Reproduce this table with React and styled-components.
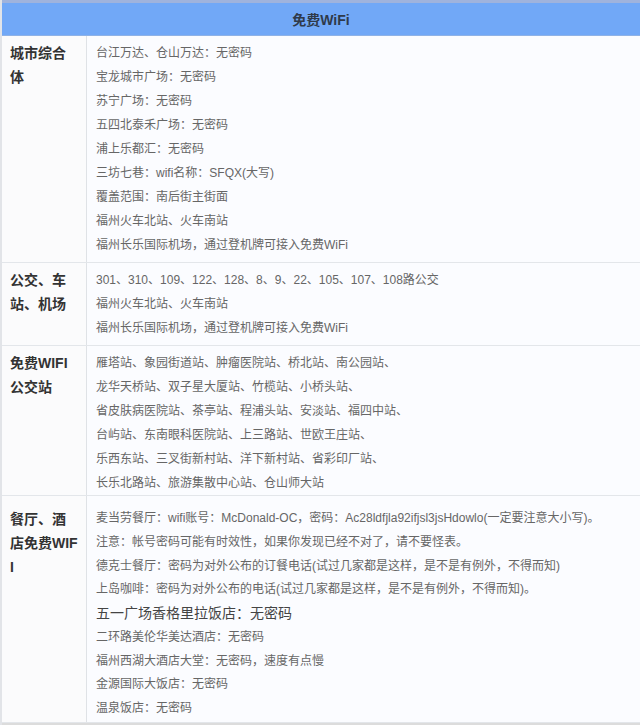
import React from "react";
import styled, { createGlobalStyle } from "styled-components";

const Global = createGlobalStyle`
  html, body { margin: 0; padding: 0; background: #fcfcfe; }
  body { font-family: "Liberation Sans", "Noto Sans CJK SC", sans-serif; }
`;

const Table = styled.div`
  width: 640px;
  height: 725px;
  overflow: hidden;
  border-left: 2px solid #e2e4e8;
  box-sizing: border-box;
  background: #fbfcfe;
  display: flex;
  flex-direction: column;
`;

const Header = styled.div`
  flex: none;
  height: 32px;
  border-top: 3px solid #9fb3dd;
  border-bottom: 1px solid #8fb2e6;
  background: #71a8f7;
  display: flex;
  align-items: center;
  justify-content: center;
  font-size: 14px;
  font-weight: 700;
  color: #2f3a4a;
`;

const Row = styled.div`
  flex: none;
  display: grid;
  grid-template-columns: 85px 1fr;
  border-bottom: 1px solid #e3e6ea;
`;

const Label = styled.div`
  padding: ${(p) => p.$pt ?? 5}px 8px 0 8px;
  font-size: 14px;
  font-weight: 700;
  line-height: 24px;
  color: #333;
  word-break: break-all;
  background: #fbfbfc;
  border-right: 1px solid #dfe2e6;
`;

const Content = styled.div`
  padding: ${(p) => p.$pt ?? 5}px 8px ${(p) => p.$pb ?? 5}px 9px;
  background: #fbfcff;
`;

const Line = styled.div`
  font-size: ${(p) => (p.$big ? 14 : 12)}px;
  line-height: ${(p) => p.$lh || 24}px;
  color: ${(p) => (p.$big ? "#444" : "#666")};
  white-space: nowrap;
`;

const Bottom = styled.div`
  flex: 1;
  background: #dcdcdc;
`;

const rows = [
  {
    label: "城市综合体",
    lines: [
      "台江万达、仓山万达：无密码",
      "宝龙城市广场：无密码",
      "苏宁广场：无密码",
      "五四北泰禾广场：无密码",
      "浦上乐都汇：无密码",
      "三坊七巷：wifi名称：SFQX(大写)",
      "覆盖范围：南后街主街面",
      "福州火车北站、火车南站",
      "福州长乐国际机场，通过登机牌可接入免费WiFi",
    ],
  },
  {
    label: "公交、车站、机场",
    lines: [
      "301、310、109、122、128、8、9、22、105、107、108路公交",
      "福州火车北站、火车南站",
      "福州长乐国际机场，通过登机牌可接入免费WiFi",
    ],
  },
  {
    label: "免费WIFI公交站",
    lines: [
      "雁塔站、象园街道站、肿瘤医院站、桥北站、南公园站、",
      "龙华天桥站、双子星大厦站、竹榄站、小桥头站、",
      "省皮肤病医院站、茶亭站、程浦头站、安淡站、福四中站、",
      "台屿站、东南眼科医院站、上三路站、世欧王庄站、",
      "乐西东站、三叉街新村站、洋下新村站、省彩印厂站、",
      "长乐北路站、旅游集散中心站、仓山师大站",
    ],
    pb: 0,
  },
  {
    label: "餐厅、酒店免费WIFI",
    pt: 11,
    pb: 1,
    lh: 23.75,
    lines: [
      "麦当劳餐厅：wifi账号：McDonald-OC，密码：Ac28ldfjla92ifjsl3jsHdowlo(一定要注意大小写)。",
      "注意：帐号密码可能有时效性，如果你发现已经不对了，请不要怪表。",
      "德克士餐厅：密码为对外公布的订餐电话(试过几家都是这样，是不是有例外，不得而知)",
      "上岛咖啡：密码为对外公布的电话(试过几家都是这样，是不是有例外，不得而知)。",
      { text: "五一广场香格里拉饭店：无密码", big: true },
      "二环路美伦华美达酒店：无密码",
      "福州西湖大酒店大堂：无密码，速度有点慢",
      "金源国际大饭店：无密码",
      "温泉饭店：无密码",
    ],
  },
];

export default function App() {
  return (
    <>
      <Global />
      <Table>
        <Header>免费WiFi</Header>
        {rows.map((r) => (
          <Row key={r.label}>
            <Label $pt={r.pt}>{r.label}</Label>
            <Content $pt={r.pt} $pb={r.pb}>
              {r.lines.map((l, i) =>
                typeof l === "string" ? (
                  <Line key={i} $lh={r.lh}>{l}</Line>
                ) : (
                  <Line key={i} $big $lh={r.lh}>{l.text}</Line>
                )
              )}
            </Content>
          </Row>
        ))}
        <Bottom />
      </Table>
    </>
  );
}
